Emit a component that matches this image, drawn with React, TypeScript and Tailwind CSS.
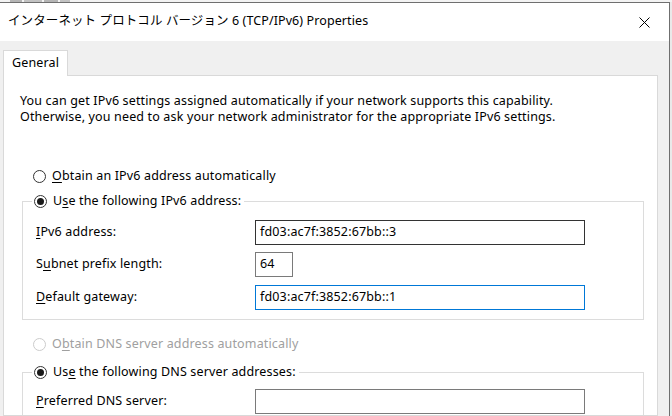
import React from "react";

const font = "font-['Noto_Sans','Noto_Sans_CJK_JP',sans-serif]";

function Radio({ checked, disabled }: { checked?: boolean; disabled?: boolean }) {
  return (
    <span
      className={`flex h-[13px] w-[13px] shrink-0 items-center justify-center rounded-full border bg-white ${
        disabled ? "border-[#cccccc]" : "border-[#333333]"
      }`}
    >
      {checked && <span className="h-[7px] w-[7px] rounded-full bg-[#1a1a1a]" />}
    </span>
  );
}

function RadioRow({
  pre,
  key1,
  post,
  checked,
  disabled,
  legend,
}: {
  pre: string;
  key1: string;
  post: string;
  checked?: boolean;
  disabled?: boolean;
  legend?: boolean;
}) {
  return (
    <div
      className={`flex h-4 items-center gap-[6px] ${
        legend ? "-mt-[9px] ml-[9px] self-start bg-white pl-[2px] pr-[3px]" : "ml-[11px]"
      } ${disabled ? "text-[#a0a0a0]" : "text-black"}`}
    >
      <Radio checked={checked} disabled={disabled} />
      <span>
        {pre}
        <span className="underline underline-offset-2">{key1}</span>
        {post}
      </span>
    </div>
  );
}

function Field({
  pre,
  key1,
  post,
  value,
  width,
  border,
}: {
  pre: string;
  key1: string;
  post: string;
  value: string;
  width: string;
  border: string;
}) {
  return (
    <div className="flex h-[25px] items-center">
      <span className="w-[232px] shrink-0 pl-[13px]">
        {pre}
        <span className="underline underline-offset-2">{key1}</span>
        {post}
      </span>
      <div className={`flex h-[25px] items-center border bg-white px-[4px] ${width} ${border}`}>
        {value}
      </div>
    </div>
  );
}

export default function App() {
  return (
    <div
      className={`relative h-[416px] w-[672px] overflow-hidden bg-[#e9e9e9] text-[12.5px] tracking-[0.15px] ${font}`}
    >
      {/* background window sliver */}
      <div className="flex h-[2px] gap-[2px] bg-[#f3f3f3] pl-[10px]">
        <div className="h-[2px] w-[12px] bg-[#b5b5b5]" />
        <div className="h-[2px] w-[18px] bg-[#c2c2c2]" />
        <div className="h-[2px] w-[14px] bg-[#b5b5b5]" />
        <div className="h-[2px] w-[10px] bg-[#c2c2c2]" />
      </div>

      <div className="flex h-[414px] w-[670px] flex-col border-r border-t border-[#6f6f6f] bg-[#f0f0f0]">
        {/* title bar */}
        <div className="flex h-[38px] shrink-0 items-center justify-between bg-white pb-[1px] pl-[8px] pr-[19px]">
          <span className="text-[12.5px] tracking-[0.1px] text-black">
            インターネット プロトコル バージョン 6 (TCP/IPv6) Properties
          </span>
          <svg width="11" height="11" viewBox="0 0 11 11" className="mt-[1px]">
            <path d="M0.5 0.5 L10.5 10.5 M10.5 0.5 L0.5 10.5" stroke="#000" strokeWidth="1" />
          </svg>
        </div>

        {/* tabs */}
        <div className="flex flex-1 flex-col pl-[3px] pr-[11px] pt-[9px]">
          <div className="flex">
            <div className="relative z-10 -mb-px flex h-[26px] w-[65px] items-center border border-b-0 border-[#d9d9d9] bg-white pb-[1px] pl-[8px]">
              General
            </div>
          </div>

          <div className="flex flex-1 flex-col border border-[#d9d9d9] bg-white pl-[18px] pr-[13px] pt-[17px]">
            <div className="-ml-[2px] leading-4">
              <p>You can get IPv6 settings assigned automatically if your network supports this capability.</p>
              <p>Otherwise, you need to ask your network administrator for the appropriate IPv6 settings.</p>
            </div>

            <div className="mt-[43px]">
              <RadioRow pre="" key1="O" post="btain an IPv6 address automatically" />
            </div>

            <div className="mt-[17px] flex flex-col border border-[#dcdcdc] pb-[9px]">
              <RadioRow pre="U" key1="s" post="e the following IPv6 address:" checked legend />
              <div className="mt-[11px] flex flex-col gap-[7px]">
                <Field
                  pre=""
                  key1="I"
                  post="Pv6 address:"
                  value="fd03:ac7f:3852:67bb::3"
                  width="w-[330px]"
                  border="border-[#333333]"
                />
                <Field
                  pre="S"
                  key1="u"
                  post="bnet prefix length:"
                  value="64"
                  width="w-[38px]"
                  border="border-[#7a7a7a]"
                />
              </div>
              <div className="mt-[8px]">
                <Field
                  pre=""
                  key1="D"
                  post="efault gateway:"
                  value="fd03:ac7f:3852:67bb::1"
                  width="w-[330px]"
                  border="border-[#0078d7]"
                />
              </div>
            </div>

            <div className="mt-[16px]">
              <RadioRow pre="O" key1="b" post="tain DNS server address automatically" disabled />
            </div>

            <div className="mt-[20px] flex flex-1 flex-col border border-b-0 border-[#dcdcdc]">
              <RadioRow pre="Us" key1="e" post=" the following DNS server addresses:" checked legend />
              <div className="mt-[9px]">
                <Field
                  pre=""
                  key1="P"
                  post="referred DNS server:"
                  value=""
                  width="w-[330px]"
                  border="border-[#7a7a7a]"
                />
              </div>
            </div>
          </div>
        </div>
      </div>
    </div>
  );
}
